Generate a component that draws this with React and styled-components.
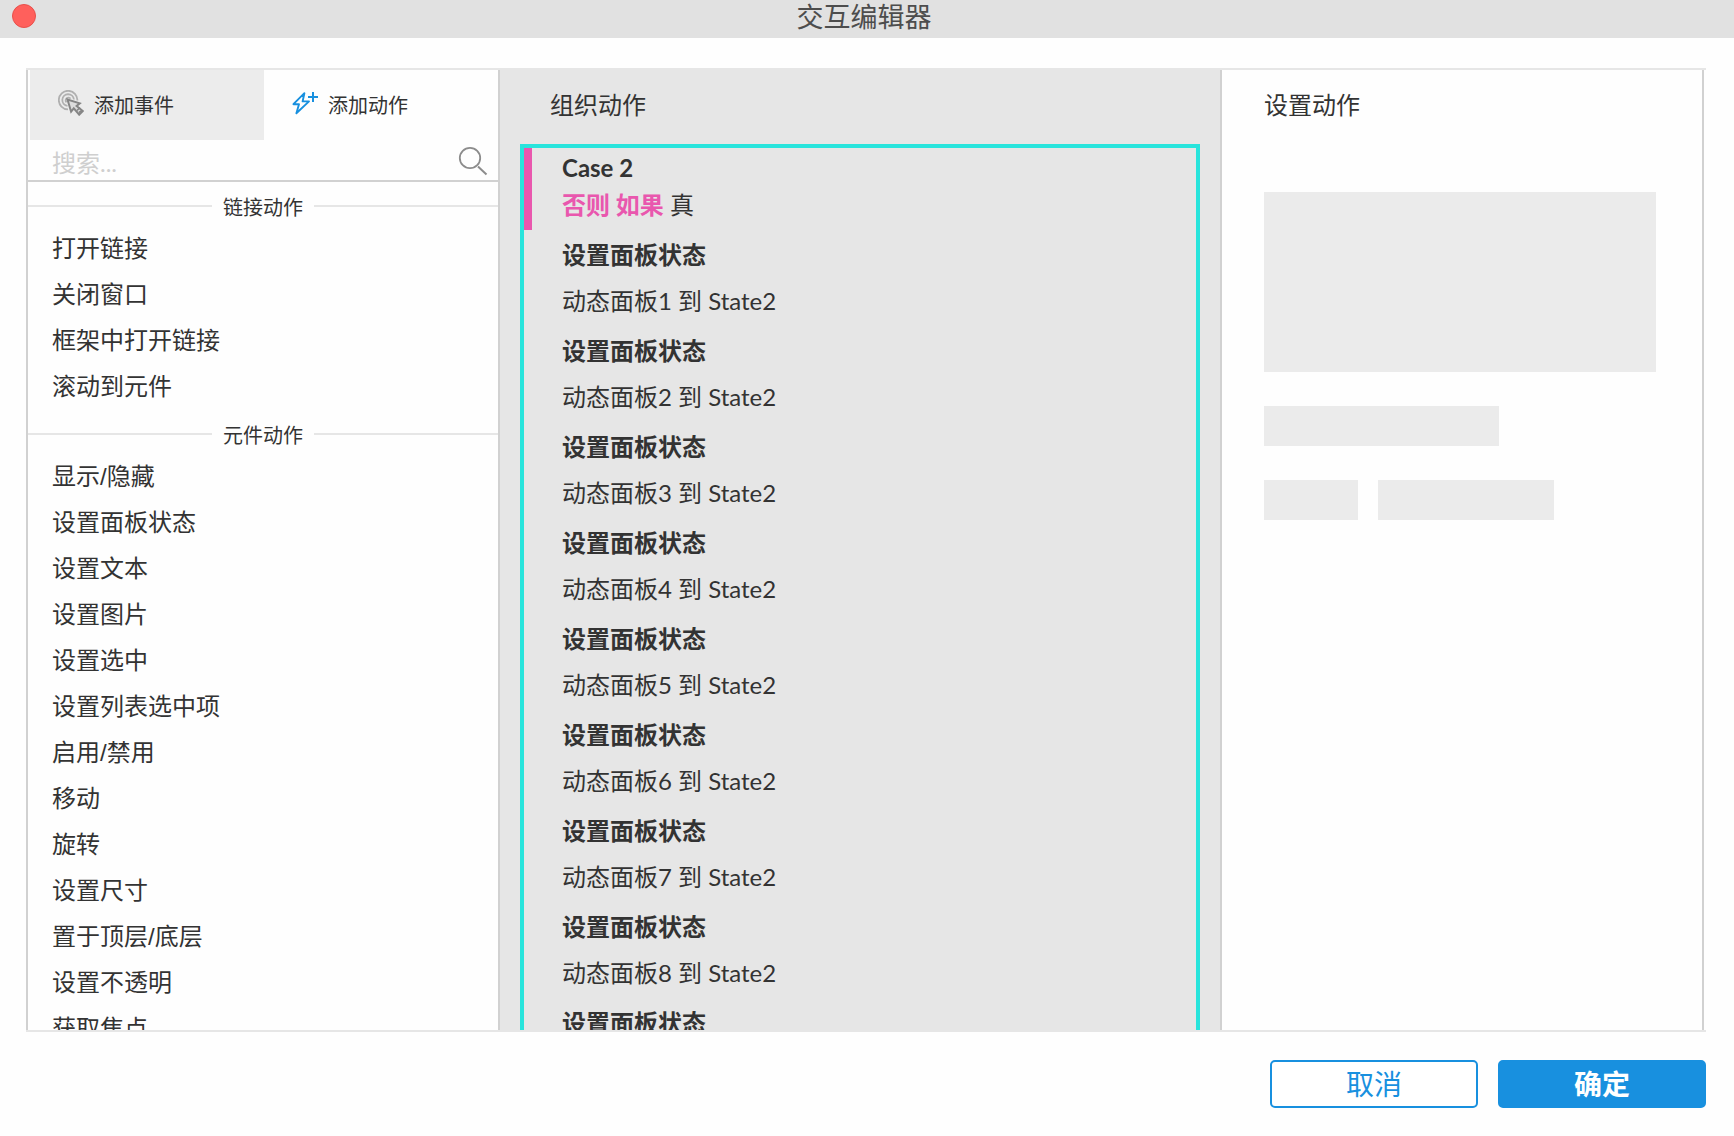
import React, { useState } from 'react';
import styled, { createGlobalStyle, css } from 'styled-components';

const GlobalStyle = createGlobalStyle`
  * {
    box-sizing: border-box;
  }

  body {
    margin: 0;
    background: #fefefe;
    color: #333;
    font-family: Lato, 'Noto Sans CJK SC', sans-serif;
    font-size: 24px;
  }

  button, input {
    font-family: inherit;
    color: inherit;
  }

  ul, h1, h2, h3, p {
    margin: 0;
    padding: 0;
    font-size: inherit;
    font-weight: normal;
    list-style: none;
  }
`;

const Dialog = styled.div`
  display: flex;
  flex-direction: column;
  height: 100vh;
`;

const TitleBar = styled.header`
  display: grid;
  grid-template-columns: 24px 1fr 30px;
  align-items: center;
  height: 38px;
  padding: 0 12px 6px;
  background: #e1e1e1;
`;

const CloseButton = styled.button`
  width: 24px;
  height: 24px;
  padding: 0;
  border: 1px solid #e8504b;
  border-radius: 50%;
  background: #ff605c;
`;

const Title = styled.h1`
  padding-top: 2px;
  color: #4d4d4d;
  font-size: 27px;
  line-height: 30px;
  text-align: center;
`;

const Workspace = styled.main`
  display: flex;
  flex: 1;
  min-height: 0;
  margin: 30px 28px 0 26px;
  padding-right: 2px;
  border: solid #e6e6e6;
  border-width: 2px 0;
`;

const Library = styled.section`
  display: flex;
  flex-direction: column;
  width: 474px;
  border: solid #d1d1d1;
  border-width: 0 2px;
`;

const Tabs = styled.div`
  display: flex;
  flex-shrink: 0;
  height: 70px;
  padding-left: 2px;
`;

const Tab = styled.button`
  display: flex;
  flex: 1;
  align-items: center;
  gap: 10px;
  padding: 0 28px 2px;
  border: none;
  background: ${props => (props.$active ? 'transparent' : '#ececec')};
  font-size: 20px;

  svg {
    margin-bottom: 2px;
  }
`;

const Search = styled.label`
  display: flex;
  flex-shrink: 0;
  align-items: center;
  height: 42px;
  padding: 0 10px 0 24px;
  border-bottom: 2px solid #d1d1d1;

  svg {
    margin-top: 2px;
  }
`;

const SearchInput = styled.input`
  flex: 1;
  min-width: 0;
  padding: 6px 0 0;
  border: none;
  outline: none;
  background: none;
  font-size: 24px;
  line-height: 32px;

  &::placeholder {
    color: #cfcfcf;
    opacity: 1;
  }
`;

const scroll = css`
  flex: 1;
  min-height: 0;
  overflow-y: auto;
  scrollbar-width: none;
`;

const Groups = styled.div`
  ${scroll}
  font-family: 'Liberation Sans', 'Noto Sans CJK SC', sans-serif;
`;

const GroupTitle = styled.h3`
  display: flex;
  align-items: center;
  gap: 11px;
  height: 44px;
  padding-top: 4px;
  font-size: 20px;

  &::before,
  &::after {
    content: '';
    flex: 1;
    height: 2px;
    background: #e6e6e6;
  }
`;

const Item = styled.li`
  padding-left: 24px;
  line-height: 46px;
`;

const Organizer = styled.section`
  display: flex;
  flex: 1;
  flex-direction: column;
  min-width: 0;
  padding: 0 20px;
  background: #e6e6e6;
`;

const PanelTitle = styled.h2`
  flex-shrink: 0;
  line-height: 70px;
`;

const OrganizerTitle = styled(PanelTitle)`
  height: 74px;
  padding-left: 30px;
`;

const CaseBox = styled.div`
  ${scroll}
  border: 4px solid #28e4dc;
  border-bottom: none;
`;

const CaseHeader = styled.div`
  height: 82px;
  padding-left: 30px;
  border-left: 8px solid #e957ae;
`;

const CaseName = styled.h3`
  font-weight: bold;
  line-height: 40px;
`;

const Condition = styled.p`
  line-height: 34px;

  strong {
    color: #e957ae;
  }
`;

const Action = styled.li`
  padding: 0 0 4px 38px;
`;

const ActionName = styled.h3`
  font-weight: bold;
  line-height: 50px;
`;

const ActionTarget = styled.p`
  line-height: 42px;
`;

const Settings = styled.section`
  width: 484px;
  padding: 0 46px 0 42px;
  border: solid #d1d1d1;
  border-width: 0 2px;
`;

const Placeholders = styled.div`
  display: flex;
  flex-direction: column;
  gap: 34px;
  margin-top: 52px;
`;

const PlaceholderRow = styled.div`
  display: flex;
  gap: 20px;
`;

const Placeholder = styled.div`
  width: ${props => props.$width};
  height: ${props => (props.$tall ? '180px' : '40px')};
  background: #ebebeb;
`;

const Footer = styled.footer`
  display: flex;
  justify-content: flex-end;
  gap: 20px;
  padding: 28px;
`;

const Button = styled.button`
  width: 208px;
  height: 48px;
  padding: 0;
  border: 2px solid #1890df;
  border-radius: 5px;
  background: ${props => (props.$primary ? '#1890df' : '#fff')};
  color: ${props => (props.$primary ? '#fff' : '#1890df')};
  font-size: 28px;
  font-weight: ${props => (props.$primary ? 'bold' : 'normal')};
  line-height: 40px;
`;

const groups = [
  {
    title: '链接动作',
    items: ['打开链接', '关闭窗口', '框架中打开链接', '滚动到元件']
  },
  {
    title: '元件动作',
    items: [
      '显示/隐藏',
      '设置面板状态',
      '设置文本',
      '设置图片',
      '设置选中',
      '设置列表选中项',
      '启用/禁用',
      '移动',
      '旋转',
      '设置尺寸',
      '置于顶层/底层',
      '设置不透明',
      '获取焦点'
    ]
  }
];

const actions = [
  { name: '设置面板状态', target: '动态面板1 到 State2' },
  { name: '设置面板状态', target: '动态面板2 到 State2' },
  { name: '设置面板状态', target: '动态面板3 到 State2' },
  { name: '设置面板状态', target: '动态面板4 到 State2' },
  { name: '设置面板状态', target: '动态面板5 到 State2' },
  { name: '设置面板状态', target: '动态面板6 到 State2' },
  { name: '设置面板状态', target: '动态面板7 到 State2' },
  { name: '设置面板状态', target: '动态面板8 到 State2' },
  { name: '设置面板状态' }
];

const EventIcon = () => (
  <svg width="26" height="26" viewBox="0 0 26 26" fill="none">
    <g stroke="#b0b0b0" strokeWidth="1.8">
      <path d="M10 19.4A9.3 9.3 0 1 1 19.4 10.5" />
      <path d="M9.5 15.8A5.8 5.8 0 1 1 15.9 9.5" />
      <path d="M8.5 12.4A2.8 2.8 0 1 1 12.6 8.6" />
    </g>
    <path
      d="M9.5 9.5l3.6 12.2 2.7-3.4 5.4 6.4 3.6-3.6-6.2-5.2 3.2-2.6z"
      fill="#dcdcdc"
      stroke="#858585"
      strokeWidth="2"
    />
    <path d="M19 20.5l3-3M21 22.5l3-2" stroke="#858585" strokeWidth="1.6" />
  </svg>
);

const ActionIcon = () => (
  <svg width="26" height="26" viewBox="0 0 26 26" fill="none" stroke="#1890df">
    <path
      d="M12.4 3.2L1.4 14.2H7L4.4 23.3 17 11.4H10.6L12.4 3.2z"
      strokeWidth="1.9"
      strokeLinejoin="round"
    />
    <path d="M16 7h10M21 2v10" strokeWidth="2" />
  </svg>
);

const SearchIcon = () => (
  <svg width="30" height="30" viewBox="0 0 30 30" fill="none" stroke="#8c8c8c">
    <circle cx="12" cy="12" r="10.2" strokeWidth="1.8" />
    <path d="M20 20.5l8.5 8" strokeWidth="2" />
  </svg>
);

const App = () => {
  const [tab, setTab] = useState('action');
  const [keyword, setKeyword] = useState('');

  return (
    <Dialog>
      <GlobalStyle />
      <TitleBar>
        <CloseButton type="button" aria-label="关闭" />
        <Title>交互编辑器</Title>
      </TitleBar>
      <Workspace>
        <Library>
          <Tabs>
            <Tab $active={tab === 'event'} onClick={() => setTab('event')}>
              <EventIcon />
              添加事件
            </Tab>
            <Tab $active={tab === 'action'} onClick={() => setTab('action')}>
              <ActionIcon />
              添加动作
            </Tab>
          </Tabs>
          <Search>
            <SearchInput
              type="text"
              aria-label="搜索"
              placeholder="搜索..."
              value={keyword}
              onChange={e => setKeyword(e.target.value)}
            />
            <SearchIcon />
          </Search>
          <Groups>
            {groups.map(group => (
              <div key={group.title}>
                <GroupTitle>{group.title}</GroupTitle>
                <ul>
                  {group.items
                    .filter(item => item.includes(keyword))
                    .map(item => (
                      <Item key={item}>{item}</Item>
                    ))}
                </ul>
              </div>
            ))}
          </Groups>
        </Library>
        <Organizer>
          <OrganizerTitle>组织动作</OrganizerTitle>
          <CaseBox>
            <CaseHeader>
              <CaseName>Case 2</CaseName>
              <Condition>
                <strong>否则 如果</strong> 真
              </Condition>
            </CaseHeader>
            <ul>
              {actions.map((action, i) => (
                <Action key={i}>
                  <ActionName>{action.name}</ActionName>
                  {action.target && <ActionTarget>{action.target}</ActionTarget>}
                </Action>
              ))}
            </ul>
          </CaseBox>
        </Organizer>
        <Settings>
          <PanelTitle>设置动作</PanelTitle>
          <Placeholders>
            <Placeholder $width="100%" $tall />
            <Placeholder $width="60%" />
            <PlaceholderRow>
              <Placeholder $width="24%" />
              <Placeholder $width="45%" />
            </PlaceholderRow>
          </Placeholders>
        </Settings>
      </Workspace>
      <Footer>
        <Button type="button">取消</Button>
        <Button type="button" $primary>
          确定
        </Button>
      </Footer>
    </Dialog>
  );
};

export default App;
